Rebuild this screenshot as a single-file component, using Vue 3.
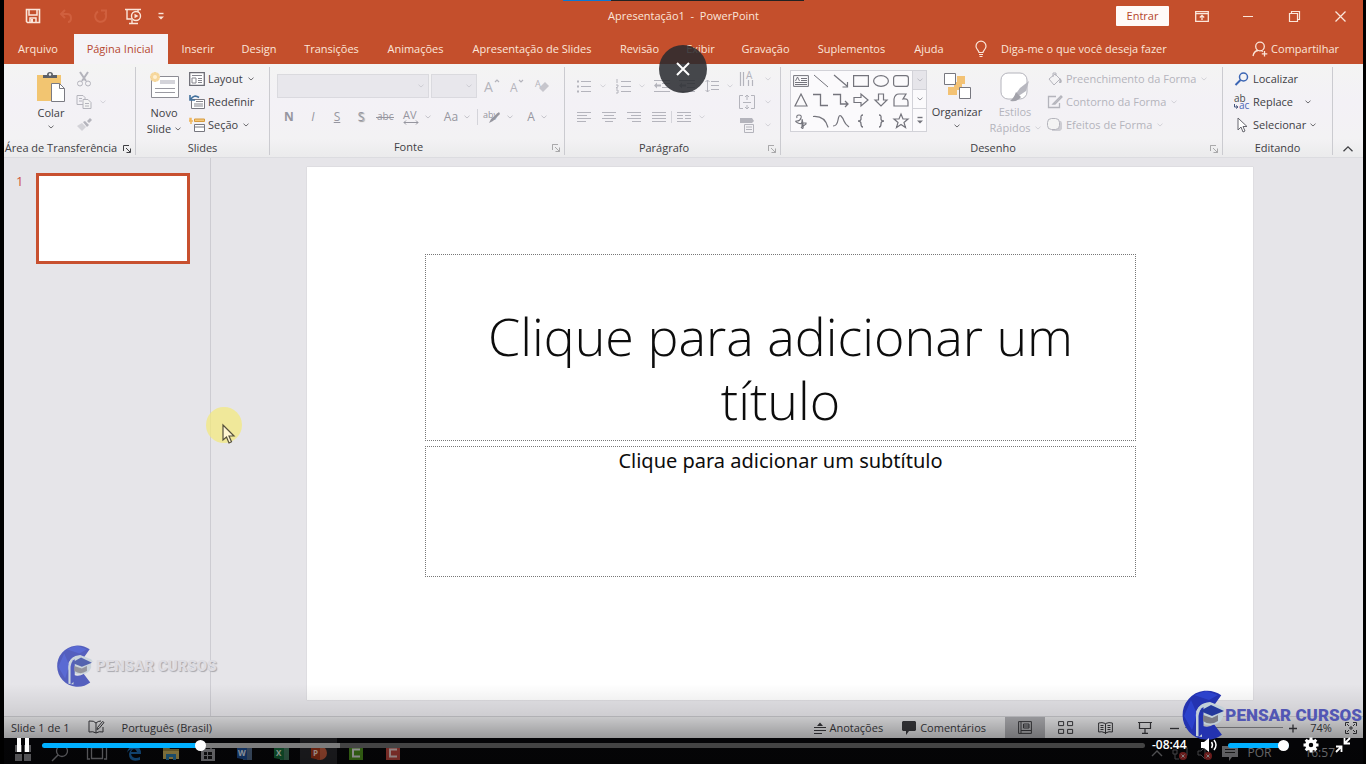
<script setup>
import { h, ref } from 'vue'

const G = 'fill="none" stroke="currentColor"'
const icons = {
  chev: [6, 4, `<path d="M.5.7 3 3 5.500.7" ${G} stroke-width="1"/>`],
  save: [16, 16, `<path d="M1.500 1.500h13v13h-12l-1-1z" ${G} stroke-width="1.600"/><path d="M4 2v5h8V2M5 14v-4h6v4" ${G} stroke-width="1.500"/><path d="M6 11h2v3H6z" fill="currentColor"/>`],
  undo: [14, 14, `<path d="M6 1 2 5l4 4M2 5h6q4 0 4 4t-3 4" ${G} stroke-width="2"/>`],
  redo: [14, 14, `<path d="M5 2.500A5.500 5.500 0 1 0 12 4M8 1.500h5v5" ${G} stroke-width="2"/>`],
  show: [18, 17, `<path d="M1 1.500h16M3 2v9h5M14 2v2M8 15.500h-3M8 12v3.500h6" ${G} stroke-width="1.400"/><circle cx="12" cy="8" r="4.500" ${G} stroke-width="1.400"/><path d="M10.500 5.800 14.500 8l-4 2.300z" fill="currentColor"/>`],
  more: [8, 8, `<path d="M1.500 1.500h5" ${G} stroke-width="1.400"/><path d="M1 4.500h6L4 7.500z" fill="currentColor"/>`],
  ribbonOpt: [14, 11, `<path d="M.7.7h12.600v9.600H.7zM.7 2.700h12.600M7 9V4.500M4.800 6.500 7 4.300l2.200 2.200" ${G} stroke-width="1.300"/>`],
  min: [10, 10, `<path d="M0 5.500h10" ${G}/>`],
  restore: [11, 11, `<path d="M.5 2.500h8v8h-8zM2.500 2.500v-2h8v8h-2" ${G} stroke-width="1.200"/>`],
  close: [11, 11, `<path d="m.5.5 10 10m0-10-10 10" ${G} stroke-width="1.300"/>`],
  bulb: [12, 18, `<path d="M4 12.500c0-2-3-3-3-6.300a5 5 0 0 1 10 0c0 3.300-3 4.300-3 6.300zM4 14.500h4M4.500 16.500h3" ${G} stroke-width="1.200"/>`],
  person: [16, 16, `<circle cx="8" cy="5.500" r="4.300" ${G} stroke-width="1.300"/><path d="M1 15q1-5 5-5.500M9 9.500l2 1M12.500 10v5.500M9.800 12.800h5.500" ${G} stroke-width="1.300"/>`],
  paste: [30, 32, `<path d="M1 4h24v26H1z" fill="#f2c571"/><path d="M7 7V4h4q0-3 3-3t3 3h4v3z" fill="#5c6068"/><circle cx="14" cy="3.500" r="1.200" fill="#f3f3f3"/><path d="M15.500 12.500h8l5 5v13h-13z" fill="#fff" stroke="#7a7a82"/><path d="M23.500 12.500v5h5" fill="none" stroke="#7a7a82"/>`],
  cut: [16, 16, `<path d="M4 1l6 9M12 1 6 10" ${G} stroke-width="2"/><circle cx="4" cy="12.500" r="2.500" ${G}/><circle cx="12" cy="12.500" r="2.500" ${G}/>`],
  copy: [16, 14, `<path d="M1 .5h6l2 2v7H1zM3 3.500h3M3 6h3" ${G}/><path d="M7 4.500h5l3 3v6H7z" fill="#f3f3f3" stroke="currentColor"/><path d="M9 8.500h4M9 11h4" ${G}/>`],
  brush: [16, 14, `<path d="m1 8 5-3 4 4-4 4z" fill="currentColor" opacity=".5"/><path d="m7 4 2-1 4 4-2 2zM11 3l3-3 2 2-3 3z" fill="currentColor"/>`],
  newSlide: [30, 28, `<path d="M2.500 5.500h27v21h-27z" fill="#fff" stroke="#8c8c94"/><path d="M11 9h15v4H11z" fill="#d4d4da"/><path d="M6 17.500h20M6 21.500h20" stroke="#9a9aa2"/><path d="M6 1v10M1 6h10M2.500 2.500l7 7m0-7-7 7" stroke="#f6d79c" stroke-width="3"/><circle cx="6" cy="6" r="2" fill="#fff0d2"/>`],
  layout: [16, 14, `<path d="M.7.7h14.600v12.600H.7z" fill="#fff" stroke="#6c6c74" stroke-width="1.300"/><path d="M3 3.500h10M3 6v5h4V6z" fill="none" stroke="#85858d"/><path d="M9 6.500h4M9 8.500h4M9 10.500h4" stroke="#85858d"/>`],
  reset: [16, 14, `<path d="M2.500 4.500h13v9h-13z" fill="#fff" stroke="#77777f"/><path d="M7 6.500h7M5 9h9M5 11h9" stroke="#85858d"/><path d="M1 0v5h5M1.500 4.500Q5-1 10 2.500" fill="none" stroke="#42709c" stroke-width="1.600"/>`],
  section: [16, 14, `<path d="M1 .5h1v1H1zM0 3h4M2 1v5" stroke="#efb65e" fill="none" stroke-width="1.500"/><path d="M5.500 1h10v2.500h-10z" fill="#f3c77c" stroke="#d79b3c"/><path d="M5.500 6.500h10v7h-10zM5.500 9h10" fill="#fff" stroke="#77777f"/>`],
  launch: [8, 8, `<path d="M.5 6V.5H6M3 3l4 4M7.500 3.500v4h-4" ${G}/>`],
  growA: [16, 16, `<path d="m11 4 2-2 2 2" ${G} stroke-width="1.200"/><text x="0" y="14" font-size="14" fill="currentColor">A</text>`],
  shrinkA: [16, 16, `<path d="m10 2 2 2 2-2" ${G} stroke-width="1.200"/><text x="1" y="14" font-size="12" fill="currentColor">A</text>`],
  clear: [16, 16, `<text x="1" y="9" font-size="9" fill="currentColor">A</text><path d="m5 10 6-6 4 4-6 6z" fill="currentColor" opacity=".7"/>`],
  abc: [18, 14, `<text x="1" y="10" font-size="10" fill="currentColor">abc</text><path d="M0 7.500h18" stroke="currentColor"/>`],
  av: [16, 16, `<text x="0" y="10" font-size="11" fill="currentColor">AV</text><path d="M1 13.500h14M3 11.500l-2 2 2 2M13 11.500l2 2-2 2" ${G}/>`],
  hi: [18, 16, `<text x="0" y="9" font-size="9" fill="currentColor">aby</text><path d="m6 14 2-4 8-7 1 2-7 7z" fill="currentColor"/>`],
  bullets: [16, 14, `<path d="M5 2.500h10M5 7.500h10M5 12.500h10" ${G}/><path d="M1 1.500h2v2H1zM1 6.500h2v2H1zM1 11.500h2v2H1z" fill="currentColor"/>`],
  numbers: [16, 16, `<path d="M6 3.500h10M6 8.500h10M6 13.500h10M2 1v4M1 7h2v1.500L1 10h2M1 12h2v3H1" ${G}/>`],
  indent: [16, 14, `<path d="M0 1.500h16M8 4.500h8M8 8.500h8M0 12.500h16" ${G}/><path d="m0 6.500 3-3v2h4v2H3v2z" fill="currentColor"/>`],
  spacing: [14, 14, `<path d="M6 2.500h8M6 6.500h8M6 10.500h8M2.500 1v12M.5 3l2-2 2 2M.5 11l2 2 2-2" ${G}/>`],
  left: [14, 12, `<path d="M0 1.500h14M0 4.500h10M0 7.500h14M0 10.500h9" ${G}/>`],
  center: [14, 12, `<path d="M0 1.500h14M2 4.500h10M0 7.500h14M3 10.500h8" ${G}/>`],
  right: [14, 12, `<path d="M0 1.500h14M4 4.500h10M0 7.500h14M5 10.500h9" ${G}/>`],
  just: [14, 12, `<path d="M0 1.500h14M0 4.500h14M0 7.500h14M0 10.500h14" ${G}/>`],
  cols: [14, 12, `<path d="M0 1.500h14M0 4.500h6M8 4.500h6M0 7.500h6M8 7.500h6M0 10.500h14" ${G}/>`],
  textDir: [16, 16, `<path d="M1.500 1v14M4.500 1v14M9.500 9v6M13.500 9v6" ${G} stroke-width="1.200"/><text x="7" y="8" font-size="10" fill="currentColor">A</text>`],
  textAlign: [16, 16, `<path d="M4 1.500H.5v13H4M12 1.500h3.500v13H12M4 8.500h8M8 1v5M6 3l2-2 2 2M8 11v4M6 13l2 2 2-2" ${G}/>`],
  smart: [16, 16, `<path d="M1 1h12l2 3-2 2H1z" fill="currentColor"/><path d="M5.500 7.500h9v8h-9zM7 10h6M7 12.500h6" ${G}/>`],
  arrange: [28, 28, `<path d="M14 4h8v8h-8zM5 15h9v8H5zM11 10h8v8h-8z" fill="#f3c274"/><path d="M1.500 1.500h11v11h-11zM16.500 15.500h11v11h-11z" fill="#fff" stroke="#77777f"/>`],
  styles: [30, 30, `<rect x="1" y="1" width="26" height="26" rx="7" fill="#fff" stroke="#b4b4bc"/><path d="m29 9-3 10-9 6-2-2 5-7z" fill="#b8b8c0"/><path d="m16 20 5 5q-3 5-11 4 4-3 6-9z" fill="#a2a2aa"/>`],
  fill: [16, 14, `<path d="m2 7 6-5 5 5-6 6zM6 5V1h3v3" ${G}/><path d="M13 6q3 3 1 5h-2z" fill="currentColor"/>`],
  outline: [16, 14, `<path d="M9 1.500H1.500v11h11V8M6 9l8-8 1 1-7 7z" ${G} stroke-width="1.300"/>`],
  effects: [16, 14, `<path d="M5 3h9l1 2v6l-2 2H5z" fill="currentColor" opacity=".6"/><rect x=".5" y=".5" width="12" height="11" rx="4" fill="#f3f3f3" stroke="currentColor"/>`],
  find: [14, 14, `<circle cx="8.500" cy="5" r="4" fill="none" stroke="#3c66b4" stroke-width="1.500"/><path d="m5.500 8-5 5" stroke="#3c66b4" stroke-width="2"/>`],
  replace: [18, 16, `<text x="1" y="8" font-size="10" fill="#4a4a4a">ab</text><text x="6" y="15" font-size="10" fill="#4a64b4">ac</text><path d="M1.500 10v3h3M3 11.500l2 1.500-2 1.500" fill="none" stroke="#44547c"/>`],
  select: [12, 16, `<path d="M2 1v12l3-3 2 5 2-1-2-4.500h4z" fill="#fff" stroke="#66666e"/>`],
  up: [10, 6, `<path d="m.5 5.300 4.500-4.500 4.500 4.500" ${G} stroke-width="1.300"/>`],
  proof: [16, 15, `<path d="M8 3v10q-3-2-7-1V1q5-.5 7 2Q10 1 13 1M8 13q3-2 7-1V7M14.500 1.500l-5 6-.5 2 2-1 5-6z" ${G}/>`],
  notes: [12, 12, `<path d="M0 5.500h12M0 8.500h12M0 11.500h8" ${G}/><path d="M3 4h6L6 .5z" fill="currentColor"/>`],
  comment: [14, 14, `<path d="M1 0h12l1 1v8l-1 1H7l-3 4v-4H1L0 9V1z" fill="currentColor"/>`],
  normal: [14, 13, `<path d="M.6.6h12.800v11.800H.6zM3 .6v11.800M3 9.500h10M5.500 3h5.500v4H5.500zM5.500 5H11" ${G}/>`],
  sorter: [15, 13, `<path d="M.6.6h5v4h-5zM9.600.6h5v4h-5zM.6 8.400h5v4h-5zM9.600 8.400h5v4h-5z" ${G}/>`],
  reading: [15, 12, `<path d="M7.500 2v10M7.500 1.500Q4 0 .6 1v9q3-1 6.900 1Q11 9 14.400 10V1Q11 0 7.500 1.500M2.500 3.500h3M2.500 5.500h3M2.500 7.500h3M9.500 3.500h3M9.500 5.500h3M9.500 7.500h3" ${G}/>`],
  present: [14, 13, `<path d="M0 1.500h14M1.500 2v5.500h11V2M7 8v4M4 12.400h6" ${G} stroke-width="1.200"/>`],
  minus: [10, 10, `<path d="M0 5.500h9" ${G} stroke-width="1.300"/>`],
  plus: [10, 10, `<path d="M1 5.500h8M5 1.500v8" ${G} stroke-width="1.300"/>`],
  fit: [12, 12, `<path d="M.5 4V.5H4M8 .5h3.500V4M11.500 8v3.500H8M4 11.500H.5V8M4 6h4M6 4v4M2 2l2 2M10 2 8 4M2 10l2-2M10 10 8 8" ${G}/>`],
  win: [16, 16, `<path d="M0 0h7v7H0zM9 0h7v7H9zM0 9h7v7H0zM9 9h7v7H9z" fill="#85858a"/>`],
  search: [18, 18, `<circle cx="11" cy="7" r="5.500" fill="none" stroke="#85858a" stroke-width="1.300"/><path d="m7 11-6 6" stroke="#85858a" stroke-width="1.500"/>`],
  task: [20, 14, `<path d="M4.500 1.500h11v11h-11zM3 1H.5v12H3M17 1h2.500v12H17" fill="none" stroke="#85858a" stroke-width="1.300"/>`],
  edge: [16, 16, `<path d="M1 8Q2 1 8.500 1T15 9H5q1 4 5 4 2 0 4-1v3q-11 3-11-6 0-3 3-5-4 1-5 4zM5 7h6Q10 4 8 4T5 7z" fill="#1b68ad" fill-rule="evenodd"/>`],
  folder: [18, 14, `<path d="M1 1h6l1 2h9v10H1z" fill="#97813c"/><path d="M1 5h16v8H1z" fill="#c2ab5a"/><path d="M4 8h10v6h-3v-3H7v3H4z" fill="#2a78a8"/>`],
  store: [16, 18, `<path d="M1 5h14v12H1z" fill="#95959a"/><path d="M5 5V2h6v3" fill="none" stroke="#95959a" stroke-width="1.500"/><path d="M4 8h3v3H4zM8 8h4v3H8zM4 12h3v3H4zM8 12h4v3H8z" fill="#161618"/>`],
  word: [16, 16, `<path d="M6 1h9v14H6z" fill="#4f6685"/><path d="M0 3 10 1v14L0 13z" fill="#1c4b90"/><text x="1" y="11" font-size="8" font-weight="700" fill="#d9e2f0">W</text>`],
  excel: [16, 16, `<path d="M6 1h9v14H6z" fill="#3f755b"/><path d="M0 3 10 1v14L0 13z" fill="#146838"/><text x="2" y="11" font-size="8" font-weight="700" fill="#d9e8de">X</text>`],
  ppt: [16, 16, `<circle cx="9" cy="8" r="7" fill="#c05a3c"/><path d="M0 3 9 1v14L0 13z" fill="#a23519"/><text x="2" y="11" font-size="8" font-weight="700" fill="#f0d5cb">P</text>`],
  camG: [14, 14, `<path d="M0 0h14v14H0z" fill="#4b8c1c"/><path d="M11 3.500H4v7h7" fill="none" stroke="#d9d9d9" stroke-width="2"/>`],
  camR: [14, 14, `<path d="M0 0h14v14H0z" fill="#b8443c"/><path d="M11 3.500H4v7h7" fill="none" stroke="#e2cac8" stroke-width="2"/>`],
  caret: [12, 7, `<path d="m1 6 5-5 5 5" fill="none" stroke="#7c7c80" stroke-width="1.400"/>`],
  net: [16, 14, `<path d="M4 1.500h11v8H8M1 4h4v4H1zM3 8v5h4" fill="none" stroke="#6a6a6e"/><circle cx="11" cy="10" r="4" fill="#a82c2c"/><path d="m9.500 8.500 3 3m0-3-3 3" stroke="#ccc"/>`],
  mute: [16, 14, `<path d="M1 5h3l4-4v12L4 9H1z" fill="none" stroke="#6a6a6e"/><circle cx="11" cy="10" r="4" fill="#a82c2c"/><path d="m9.500 8.500 3 3m0-3-3 3" stroke="#ccc"/>`],
  note: [16, 15, `<path d="M0 0h16v11h-6l-3 4v-4H0z" fill="#959599"/><path d="M3 3.500h10M3 6.500h10" stroke="#222"/>`],
  pause: [12, 14, `<path d="M0 0h4v14H0zM8 0h4v14H8z" fill="#fff"/>`],
  speaker: [17, 14, `<path d="M0 4h3l5-4v14l-5-4H0z" fill="#fff"/><path d="M10.500 4q2 3 0 6M13 2q4 5 0 10" fill="none" stroke="#fff" stroke-width="1.500"/>`],
  gear: [16, 16, `<circle cx="8" cy="8" r="4" fill="none" stroke="#fff" stroke-width="3.500"/><path d="M8 .5V4M8 12v3.500M.5 8H4M12 8h3.500M2.700 2.700l2.500 2.500M10.800 10.800l2.500 2.500M13.300 2.700l-2.500 2.500M5.200 10.800l-2.500 2.500" stroke="#fff" stroke-width="3"/>`],
  shrink: [16, 16, `<path d="M9.500 1v5.500H15M9.500 6.500 15 1M1 9.500h5.500V15M6.500 9.500 1 15" fill="none" stroke="#fff" stroke-width="1.800"/>`],
  pointer: [14, 20, `<path d="M1 1v15l3.500-3 2.500 6 2.500-1.200L7 12h5z" fill="#fff6d2" stroke="#55503c" stroke-width="1.200"/>`],
  logo: [46, 50, `<path d="M35.500 10.500A18 18 0 1 0 36 39.500" fill="none" stroke="#2433b0" stroke-width="13"/><path d="M9 10 2 26l8 14 5-16zM12 5l12-4 12 4-9 5z" fill="#3148d8" opacity=".7"/><path d="M14 46V25q1-12 14-13l13 5q2 3 3 3h-3v7q-3 8-13 8-5 0-8-2v14" fill="#c2d0d8"/><path d="M16.500 47V26q1-7 5-9v26z" fill="#2433b0"/><path d="m18 21 11-6 13 6-12 5z" fill="#24399c"/><path d="M21 25v6q7 5 15 0v-6l-6 3z" fill="#7b7b84"/>`],
  sh0: [16, 12, `<path d="M.6.6h14.800v10.800H.6zM8 3.500h6M8 5.500h6M2 7.500h12M2 9.500h12M2.500 6 4.500 2l2 4" ${G}/>`],
  sh1: [16, 14, `<path d="m1 1 14 12" ${G}/>`],
  sh2: [16, 14, `<path d="m1 1 13 11M14.500 8v5h-5" ${G} stroke-width="1.200"/>`],
  sh3: [16, 12, `<path d="M.6.6h14.800v10.800H.6z" ${G} stroke-width="1.200"/>`],
  sh4: [16, 12, `<ellipse cx="8" cy="6" rx="7.400" ry="5.400" ${G} stroke-width="1.200"/>`],
  sh5: [16, 12, `<rect x=".6" y=".6" width="14.800" height="10.800" rx="2.500" ${G} stroke-width="1.200"/>`],
  sh6: [14, 14, `<path d="M7 1 13 13H1z" ${G} stroke-width="1.200"/>`],
  sh7: [16, 14, `<path d="M0 1.500h7.500v11H15" ${G} stroke-width="1.300"/>`],
  sh8: [16, 14, `<path d="M0 1.500h7.500v9.500H15M12 8l3 3-3 3" ${G} stroke-width="1.300"/>`],
  sh9: [16, 14, `<path d="M1 4.500h7V1l7 6-7 6V9.500H1z" ${G} stroke-width="1.200"/>`],
  sh10: [14, 14, `<path d="M4.500 1v6H1l6 6 6-6H9.500V1z" ${G} stroke-width="1.200"/>`],
  sh11: [16, 14, `<path d="M1 13V6q1-5 5-5h7l-3 5q5-1 5 3v4z" ${G} stroke-width="1.200"/>`],
  sh12: [14, 14, `<path d="M3 4Q2 1 5 1t2 3-4 3 1 2 4-2 1 3-2 3M8 9h4v1l-4 3z" ${G} stroke-width="1.100"/>`],
  sh13: [16, 14, `<path d="M0 2.500q12-1 15 11" ${G} stroke-width="1.200"/>`],
  sh14: [16, 14, `<path d="M0 12Q4 12 5 6t3-4 3 5 5 6" ${G} stroke-width="1.200"/>`],
  sh15: [8, 14, `<path d="M6 1Q3.500 1 4 4t-3 3q3 0 3 3t2 3" ${G} stroke-width="1.300"/>`],
  sh16: [8, 14, `<path d="M2 1q2.500 0 2 3t3 3q-3 0-3 3t-2 3" ${G} stroke-width="1.300"/>`],
  sh17: [16, 15, `<path d="m8 1 2 5h5l-4 3.500 1.500 5L8 11.500l-4.500 3 1.500-5L1 6h5z" ${G} stroke-width="1.200"/>`]
}

const Icon = (p) => {
  const [w, ht, body] = icons[p.name]
  return h('svg', { class: 'i-' + p.name, viewBox: `0 0 ${w} ${ht}`, width: w, height: ht, 'aria-hidden': 'true', innerHTML: body })
}
Icon.props = ['name']

const tabs = ['Arquivo', 'Página Inicial', 'Inserir', 'Design', 'Transições', 'Animações', 'Apresentação de Slides', 'Revisão', 'Exibir', 'Gravação', 'Suplementos', 'Ajuda']
const active = ref('Página Inicial')
const taskIcons = ['win', 'search', 'task', 'edge', 'folder', 'store', 'word', 'excel', 'ppt', 'camG', 'camR']
const progress = ref(14)
const volume = ref(100)
</script>

<template>
  <main class="player">
    <header class="titlebar">
      <nav class="quick" aria-label="Acesso rápido">
        <button aria-label="Salvar"><Icon name="save" /></button>
        <button class="faded" aria-label="Desfazer"><Icon name="undo" /></button>
        <button class="faded" aria-label="Refazer"><Icon name="redo" /></button>
        <button aria-label="Iniciar apresentação"><Icon name="show" /></button>
        <button aria-label="Personalizar"><Icon name="more" /></button>
      </nav>
      <h1>Apresentação1&nbsp; -&nbsp; PowerPoint</h1>
      <div class="window">
        <button class="signin">Entrar</button>
        <button aria-label="Opções da faixa"><Icon name="ribbonOpt" /></button>
        <button aria-label="Minimizar"><Icon name="min" /></button>
        <button aria-label="Restaurar"><Icon name="restore" /></button>
        <button aria-label="Fechar janela"><Icon name="close" /></button>
      </div>
    </header>

    <nav class="tabs">
      <button v-for="t in tabs" :key="t" :class="{ on: t === active }" @click="active = t">{{ t }}</button>
      <button class="tell"><Icon name="bulb" />Diga-me o que você deseja fazer</button>
      <button class="share"><Icon name="person" />Compartilhar</button>
    </nav>

    <section class="ribbon">
      <div class="group clip">
        <div class="tools">
          <button class="big"><Icon name="paste" /><span>Colar</span><Icon name="chev" /></button>
          <div class="stack off">
            <button aria-label="Recortar"><Icon name="cut" /></button>
            <button aria-label="Copiar"><Icon name="copy" /><Icon name="chev" /></button>
            <button aria-label="Pincel"><Icon name="brush" /></button>
          </div>
        </div>
        <footer class="corner">Área de Transferência<Icon name="launch" /></footer>
      </div>

      <div class="group slides">
        <div class="tools">
          <button class="big"><Icon name="newSlide" /><span>Novo</span><span>Slide <Icon name="chev" /></span></button>
          <div class="stack">
            <button><Icon name="layout" />Layout<Icon name="chev" /></button>
            <button><Icon name="reset" />Redefinir</button>
            <button><Icon name="section" />Seção<Icon name="chev" /></button>
          </div>
        </div>
        <footer>Slides</footer>
      </div>

      <div class="group font">
        <div class="tools rows off">
          <div class="row">
            <span class="box wide"><select aria-label="Fonte" disabled></select><Icon name="chev" /></span>
            <span class="box"><select aria-label="Tamanho" disabled></select><Icon name="chev" /></span>
            <button class="ic" aria-label="Aumentar"><Icon name="growA" /></button>
            <button class="ic" aria-label="Diminuir"><Icon name="shrinkA" /></button>
            <button class="ic" aria-label="Limpar"><Icon name="clear" /></button>
          </div>
          <div class="row letters">
            <button><b>N</b></button><button><i>I</i></button><button><u>S</u></button><button class="shadow">S</button>
            <button aria-label="Tachado"><Icon name="abc" /></button>
            <button class="dd" aria-label="Espaçamento"><Icon name="av" /><Icon name="chev" /></button>
            <button class="dd">Aa<Icon name="chev" /></button>
            <button class="dd cut" aria-label="Realce"><Icon name="hi" /><Icon name="chev" /></button>
            <button class="dd">A<Icon name="chev" /></button>
          </div>
        </div>
        <footer class="corner">Fonte<Icon name="launch" /></footer>
      </div>

      <div class="group para">
        <div class="tools off">
          <div class="rows">
            <div class="row">
              <button class="dd" aria-label="Marcadores"><Icon name="bullets" /><Icon name="chev" /></button>
              <button class="dd" aria-label="Numeração"><Icon name="numbers" /><Icon name="chev" /></button>
              <button class="ic" aria-label="Diminuir recuo"><Icon name="indent" /></button>
              <button class="ic" aria-label="Aumentar recuo"><Icon name="indent" /></button>
              <button class="dd" aria-label="Espaço entre linhas"><Icon name="spacing" /><Icon name="chev" /></button>
            </div>
            <div class="row">
              <button v-for="a in ['left', 'center', 'right', 'just']" :key="a" class="ic" :aria-label="a"><Icon :name="a" /></button>
              <button class="dd cut" aria-label="Colunas"><Icon name="cols" /><Icon name="chev" /></button>
            </div>
          </div>
          <div class="stack">
            <button aria-label="Direção do texto"><Icon name="textDir" /><Icon name="chev" /></button>
            <button aria-label="Alinhar texto"><Icon name="textAlign" /><Icon name="chev" /></button>
            <button aria-label="SmartArt"><Icon name="smart" /><Icon name="chev" /></button>
          </div>
        </div>
        <footer class="corner">Parágrafo<Icon name="launch" /></footer>
      </div>

      <div class="group draw">
        <div class="tools">
          <div class="gallery">
            <div class="shapes">
              <button v-for="n in 18" :key="n" :aria-label="'Forma ' + n"><Icon :name="'sh' + (n - 1)" /></button>
            </div>
            <div class="scroll">
              <button class="dim" aria-label="Acima"><Icon name="chev" /></button>
              <button aria-label="Abaixo"><Icon name="chev" /></button>
              <button aria-label="Mais"><Icon name="more" /></button>
            </div>
          </div>
          <button class="big"><Icon name="arrange" /><span>Organizar</span><Icon name="chev" /></button>
          <button class="big off"><Icon name="styles" /><span>Estilos</span><span>Rápidos <Icon name="chev" /></span></button>
          <div class="stack off">
            <button><Icon name="fill" />Preenchimento da Forma<Icon name="chev" /></button>
            <button><Icon name="outline" />Contorno da Forma<Icon name="chev" /></button>
            <button><Icon name="effects" />Efeitos de Forma<Icon name="chev" /></button>
          </div>
        </div>
        <footer class="corner">Desenho<Icon name="launch" /></footer>
      </div>

      <div class="group edit">
        <div class="tools">
          <div class="stack">
            <button><span class="slot"><Icon name="find" /></span>Localizar</button>
            <button><span class="slot"><Icon name="replace" /></span>Replace<Icon name="chev" class="far" /></button>
            <button><span class="slot"><Icon name="select" /></span>Selecionar<Icon name="chev" /></button>
          </div>
        </div>
        <footer>Editando</footer>
      </div>
      <button class="collapse" aria-label="Recolher faixa"><Icon name="up" /></button>
    </section>

    <section class="work">
      <aside class="thumbs">
        <span>1</span>
        <button aria-label="Slide 1"></button>
      </aside>
      <div class="canvas">
        <article class="slide">
          <h2>Clique para adicionar um título</h2>
          <p>Clique para adicionar um subtítulo</p>
        </article>
      </div>
    </section>

    <footer class="status">
      <span>Slide 1 de 1</span>
      <button aria-label="Revisão de texto"><Icon name="proof" /></button>
      <span>Português (Brasil)</span>
      <div class="views">
        <button class="lbl"><Icon name="notes" />Anotações</button>
        <button class="lbl"><Icon name="comment" />Comentários</button>
        <button class="view on" aria-label="Normal"><Icon name="normal" /></button>
        <button class="view" aria-label="Classificação"><Icon name="sorter" /></button>
        <button class="view" aria-label="Leitura"><Icon name="reading" /></button>
        <button class="view" aria-label="Apresentação"><Icon name="present" /></button>
        <button class="zoom" aria-label="Menos zoom"><Icon name="minus" /></button>
        <span class="line"></span>
        <button class="zoom" aria-label="Mais zoom"><Icon name="plus" /></button>
        <span class="pct">74%</span>
        <button class="zoom" aria-label="Ajustar"><Icon name="fit" /></button>
      </div>
    </footer>

    <div class="taskbar">
      <button v-for="t in taskIcons" :key="t" :class="{ on: t === 'ppt' }" :aria-label="t"><Icon :name="t" /></button>
      <div class="tray">
        <Icon name="caret" /><Icon name="net" /><Icon name="mute" /><Icon name="note" />
        <span>POR</span><time>16:57</time>
      </div>
    </div>

    <div class="shade"></div>
    <div class="mark faint"><Icon name="logo" /><strong>PENSAR CURSOS</strong></div>
    <div class="mark solid"><Icon name="logo" /><strong>PENSAR CURSOS</strong></div>
    <div class="halo"><Icon name="pointer" /></div>
    <div class="loadbar"><i></i></div>
    <button class="dismiss" aria-label="Fechar"><svg width="14" height="14" viewBox="0 0 14 14"><path d="m1 1 12 12M13 1 1 13" fill="none" stroke="#fff" stroke-width="2" /></svg></button>

    <div class="controls">
      <button aria-label="Pausar"><Icon name="pause" /></button>
      <input v-model="progress" class="seek" type="range" min="0" max="100" aria-label="Progresso" />
      <span class="left">-08:44</span>
      <button aria-label="Som"><Icon name="speaker" /></button>
      <input v-model="volume" class="vol" type="range" min="0" max="100" aria-label="Volume" />
      <button aria-label="Configurações"><Icon name="gear" /></button>
      <button aria-label="Sair da tela cheia"><Icon name="shrink" /></button>
    </div>
  </main>
</template>

<style>
body { background: #000; }
</style>

<style scoped>
* { box-sizing: border-box; }
.player { position: relative; display: flex; flex-direction: column; min-height: 100vh; padding: 0 3px 0 4px; overflow: hidden; background: #000; color: #404044; font: 500 12px/16px "Open Sans", "Noto Sans", sans-serif; }
button { display: flex; align-items: center; justify-content: center; padding: 0; border: 0; background: none; color: inherit; font: inherit; white-space: nowrap; }
svg { flex: none; overflow: visible; }
.i-chev { opacity: .75; }
.off .i-chev { opacity: .5; }
h1, h2, p { margin: 0; font-weight: 400; }

.titlebar { display: grid; grid-template-columns: 1fr auto 1fr; align-items: center; height: 32px; background: #c44f2c; color: #fbe6da; }
.quick { display: flex; padding-left: 13px; }
.quick button { width: 32px; }
.quick button:last-child { width: 24px; }
.quick .faded { width: 34px; color: #d0603e; }
.titlebar h1 { font: 500 11px/16px "Open Sans", sans-serif; }
.window { display: flex; justify-content: flex-end; }
.window button { width: 46px; height: 20px; }
.window .signin { width: 53px; margin-right: 10px; border-radius: 1px; background: #fffaf8; color: #b5452a; font-size: 11px; }

.tabs { display: grid; grid-template-columns: 70px 94px 62px 60px 85px 83px 150px 65px 57px 73px 99px 56px auto 1fr; height: 32px; background: #c44f2c; color: #fbe6da; font-size: 11px; }
.tabs button { height: 30px; align-self: end; padding-right: 2px; }
.tabs .on { background: #f5f3f6; color: #b5482f; }
.tabs .tell { gap: 14px; padding-left: 17px; }
.tabs .share { justify-self: end; gap: 3px; padding-right: 24px; }

.ribbon { display: flex; height: 94px; padding-top: 3px; background: linear-gradient(#f4f4f3, #f3f1f6 40%, #f3f2f4 80%, #ebebec); border-bottom: 1px solid #dcdce0; font-size: 11px; }
.group { display: flex; flex: none; flex-direction: column; border-right: 1px solid #cbcbd0; height: 88px; }
.group footer { position: relative; height: 16px; margin-top: 4px; text-align: center; }
.group footer.corner { padding-right: 17px; }
.group footer svg { position: absolute; right: 4px; top: 5px; opacity: .4; }
.group.clip footer svg { opacity: 1; }
.tools { display: flex; height: 69px; }
.off { color: #b4b4bc; }
.big { flex-direction: column; justify-content: flex-start; padding-top: 4px; }
.big > svg:first-child { margin-bottom: 2px; }
.big > svg:last-child { margin-top: 4px; }
.big span { display: flex; align-items: center; gap: 4px; }
.stack button { justify-content: flex-start; gap: 3px; height: 23px; }
.stack button svg:last-child:not(:first-child) { margin-left: 2px; }
.clip { width: 132px; }
.clip .tools { padding-left: 22px; }
.clip .big { width: 50px; }
.clip .stack button:nth-child(2) { gap: 6px; }
.slides { width: 134px; }
.slides .tools { padding-left: 8px; gap: 5px; }
.slides .big { width: 40px; }
.slides .big > svg:first-child { margin-bottom: 6px; }
.font { width: 295px; }
.font .tools { padding-left: 7px; }
.rows { display: flex; flex-direction: column; gap: 7px; padding-top: 7px; }
.row { display: flex; align-items: center; height: 24px; }
.box { position: relative; display: flex; align-items: center; width: 46px; height: 24px; margin-right: 2px; }
.box.wide { width: 152px; }
.box select { width: 100%; height: 100%; appearance: none; border: 1px solid #d0d0d6; border-radius: 0; background: #e4e3e9; }
.box svg { position: absolute; right: 5px; }
.ic { width: 25px; }
.letters button { width: 24px; font-size: 12px; }
.letters .dd { width: 40px; gap: 6px; }
.letters button { color: #96969f; }
.shadow { text-shadow: 1px 1px 1px #999; }
.dd { width: 39px; gap: 8px; }
.dd.cut { border-left: 1px solid #d4d4da; }
.para { width: 216px; }
.para .tools { padding-left: 6px; }
.para .rows { width: 168px; }
.para .stack button { gap: 8px; }
.group.draw { flex: 1; }
.draw .tools { padding-left: 9px; }
.gallery { display: flex; width: 137px; height: 62px; margin-top: 3px; border: 1px solid #d2d2d8; background: #fbfafc; color: #74747c; }
.shapes { display: grid; grid-template-columns: repeat(6, 20px); flex: 1; }
.scroll { display: grid; width: 14px; border-left: 1px solid #d2d2d8; }
.scroll button + button { border-top: 1px solid #d2d2d8; }
.scroll .dim { background: #e6e5ea; color: #b0b0b8; }
.draw .big { width: 56px; margin-left: 2px; padding-top: 5px; }
.draw .big > svg:first-child { margin-bottom: 4px; }
.draw .big.off > svg:first-child { margin-bottom: 2px; }
.draw .stack { margin-left: 4px; }
.edit { width: 110px; }
.edit .tools { padding-left: 10px; }
.edit .stack button { gap: 2px; }
.slot { display: flex; justify-content: center; width: 18px; }
.edit .stack .far:last-child { margin-left: 10px; }
.collapse { width: 30px; align-self: end; height: 16px; }

.work { display: flex; flex: 1; min-height: 300px; background: #e6e5e9; }
.thumbs { display: flex; width: 207px; padding: 15px 20px 0 12px; gap: 13px; border-right: 1px solid #cdccd2; color: #d0563a; font-size: 13px; }
.thumbs button { flex: 1; height: 91px; border: 3px solid #c8502f; background: #fff; }
.canvas { display: flex; flex: 1; padding: 9px 110px 16px 96px; }
.slide { flex: 1; display: flex; flex-direction: column; gap: 5px; padding: 87px 117px 0 118px; background: #fff; box-shadow: 0 0 1px #b8b8bc; color: #0c0c0c; text-align: center; }
.slide h2 { display: flex; align-items: flex-end; justify-content: center; height: 187px; padding: 0 20px 8px; border: 1px dotted #777; font: 350 52px/64px "Open Sans", "Noto Sans", sans-serif; }
.slide p { height: 131px; border: 1px dotted #777; font: 400 20px/28px "Noto Sans", sans-serif; }

.status { display: flex; align-items: center; height: 22px; padding-left: 7px; border-top: 1px solid #c6c6ca; background: #e2e2e4; color: #38383c; font-size: 11px; gap: 18px; }
.views { display: flex; align-items: center; height: 100%; margin-left: auto; }
.lbl { gap: 4px; margin-right: 19px; }
.view { width: 40px; height: 100%; }
.view.on { background: #a9a9ad; }
.zoom { width: 20px; }
.line { width: 98px; height: 1px; background: #88888c; }
.pct { width: 36px; text-align: center; }
.zoom:last-child { width: 24px; }

.taskbar { display: flex; height: 26px; background: #07070a; color: #a0a0a4; }
.taskbar button { width: 37px; padding-top: 4px; }
.taskbar .on { background: #26262a; }
.tray { display: flex; align-items: center; gap: 9px; margin-left: auto; padding: 4px 28px 0 0; }
.tray time { margin-left: 24px; }

.shade { position: absolute; inset: auto 0 0 0; height: 80px; pointer-events: none; background: linear-gradient(transparent, rgba(0, 0, 0, .1) 40%, rgba(0, 0, 0, .32) 68%, rgba(0, 0, 0, .4)); }
.mark { position: absolute; display: flex; align-items: center; white-space: nowrap; }
.mark strong { font: 900 17px/24px Roboto, sans-serif; }
.mark.solid { right: 4px; bottom: 24px; color: #5257b4; }
.mark.solid svg { margin-right: -3px; }
.mark.faint { left: 56px; bottom: 77px; color: #dddce2; text-shadow: 1px 1px 1px #a8a8ae; }
.mark.faint svg { width: 40px; height: 42px; opacity: .75; }
.mark.faint strong { font-size: 15px; }
.halo { position: absolute; left: 206px; top: 407px; display: flex; width: 36px; height: 36px; padding: 17px 0 0 16px; border-radius: 50%; background: rgba(244, 233, 120, .7); }
.loadbar { position: absolute; top: 0; left: 563px; width: 241px; height: 1px; background: #222; }
.loadbar i { display: block; width: 20%; height: 1px; background: #0a78d4; }
.dismiss { position: absolute; left: calc(50% - 24px); top: 45px; width: 48px; height: 48px; border-radius: 50%; background: rgba(40, 42, 46, .86); }

.controls { position: absolute; left: 17px; right: 15px; bottom: 11px; display: flex; align-items: center; height: 16px; color: #fff; }
.controls input { appearance: none; height: 5px; margin: 0; border-radius: 3px; }
.controls .seek { flex: 1; margin: 0 7px 0 13px; background: linear-gradient(90deg, #00b0ff 14%, #7c7c7c 14% 27%, #444 27%); }
.vol { width: 61px; background: #00b0ff; }
.controls input::-webkit-slider-thumb { appearance: none; width: 11px; height: 11px; border-radius: 50%; background: #fff; }
.left { width: 37px; font: 600 12px/16px "Open Sans", sans-serif; }
.controls .left + button { margin: 0 10px 0 12px; }
.controls .vol + button { margin: 0 16px 0 14px; }
</style>
